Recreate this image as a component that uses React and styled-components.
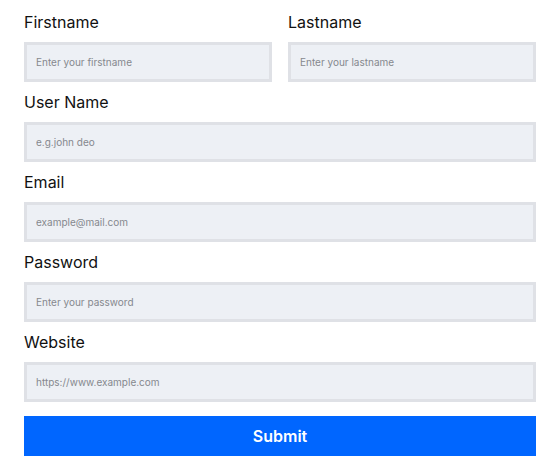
import React from "react";
import styled, { createGlobalStyle } from "styled-components";

const GlobalStyle = createGlobalStyle`
  body {
    margin: 0;
    background: #fff;
    font-family: Inter, "Noto Sans", sans-serif;
  }
`;

const Form = styled.form`
  width: 512px;
  padding: 10px 24px;
  display: flex;
  flex-direction: column;
`;

const Row = styled.div`
  display: grid;
  grid-template-columns: 1fr 1fr;
  gap: 16px;
`;

const Field = styled.div`
  display: flex;
  flex-direction: column;
  margin-bottom: 8px;
`;

const Label = styled.label`
  font-size: 16px;
  line-height: 24px;
  color: #111;
  margin-bottom: 8px;
`;

const Input = styled.input`
  box-sizing: border-box;
  height: 40px;
  width: 100%;
  border: 3px solid #dfe1e6;
  background: #edf0f5;
  padding: 0 9px;
  font-family: inherit;
  font-size: 10px;
  color: #333;
  outline: none;
  &::placeholder {
    color: #85888e;
  }
`;

const Submit = styled.button`
  margin-top: 6px;
  height: 40px;
  border: none;
  background: #0066ff;
  color: #fff;
  font-family: inherit;
  font-size: 16px;
  font-weight: 600;
`;

const TextField = ({ label, placeholder, type = "text" }) => (
  <Field>
    <Label>{label}</Label>
    <Input type={type} placeholder={placeholder} />
  </Field>
);

export default () => {
  return (
    <>
      <GlobalStyle />
      <Form onSubmit={e => e.preventDefault()}>
        <Row>
          <TextField label="Firstname" placeholder="Enter your firstname" />
          <TextField label="Lastname" placeholder="Enter your lastname" />
        </Row>
        <TextField label="User Name" placeholder="e.g.john deo" />
        <TextField label="Email" placeholder="example@mail.com" />
        <TextField
          label="Password"
          type="password"
          placeholder="Enter your password"
        />
        <TextField label="Website" placeholder="https://www.example.com" />
        <Submit type="submit">Submit</Submit>
      </Form>
    </>
  );
};
